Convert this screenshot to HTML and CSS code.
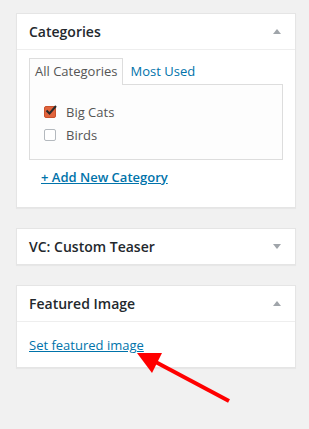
FILE: index.html
```html
<!DOCTYPE html>
<html lang="en">
<head>
    <meta charset="UTF-8">
    <meta name="viewport" content="width=device-width, initial-scale=1.0">
    <title>Post Sidebar</title>
    <link rel="stylesheet" href="styles.css">
</head>
<body>
    <div class="sidebar">
        <div class="postbox">
            <div class="postbox-header">
                <h2>Categories</h2>
                <span class="toggle up"></span>
            </div>
            <div class="inside">
                <ul class="tabs">
                    <li class="tab active">All Categories</li>
                    <li class="tab"><a href="#">Most Used</a></li>
                </ul>
                <div class="tab-panel">
                    <label class="cat-item"><span class="checkbox checked">
                        <svg width="12" height="11" viewBox="0 0 12 11"><path d="M1.5 5.5 L4.5 8.5 L11 1" fill="none" stroke="#2b2b2b" stroke-width="2"/></svg>
                    </span>Big Cats</label>
                    <label class="cat-item"><span class="checkbox"></span>Birds</label>
                </div>
                <a href="#" class="add-new">+ Add New Category</a>
            </div>
        </div>

        <div class="postbox">
            <div class="postbox-header closed">
                <h2>VC: Custom Teaser</h2>
                <span class="toggle down"></span>
            </div>
        </div>

        <div class="postbox">
            <div class="postbox-header">
                <h2>Featured Image</h2>
                <span class="toggle up"></span>
            </div>
            <div class="inside featured">
                <a href="#" class="set-image">Set featured image</a>
            </div>
        </div>
    </div>

    <!-- red pointer arrow drawn over the page -->
    <svg class="pointer" width="309" height="429" viewBox="0 0 309 429">
        <line x1="229" y1="401" x2="150" y2="359" stroke="#ff0000" stroke-width="4"/>
        <polygon points="137,353 162,353 152,373" fill="#ff0000"/>
    </svg>
</body>
</html>
```

FILE: styles.css
```css
body {
    margin: 0;
    background-color: #f1f1f1;
    font-family: "Open Sans", sans-serif;
    font-size: 13px;
    color: #444;
}
.sidebar {
    width: 280px;
    padding: 13px 0 0 16px;
}
.postbox {
    background-color: #fff;
    border: 1px solid #e5e5e5;
    box-shadow: 0 1px 1px rgba(0, 0, 0, 0.04);
    margin-bottom: 20px;
}
.postbox-header {
    display: flex;
    align-items: center;
    justify-content: space-between;
    height: 35px;
    padding: 0 14px 0 12px;
    border-bottom: 1px solid #eee;
}
.postbox-header.closed {
    border-bottom: none;
}
.postbox-header h2 {
    margin: 0;
    font-size: 14px;
    font-weight: 600;
    color: #23282d;
}
.toggle {
    width: 0;
    height: 0;
    border-left: 4px solid transparent;
    border-right: 4px solid transparent;
}
.toggle.up {
    border-bottom: 5px solid #a0a5aa;
}
.toggle.down {
    border-top: 5px solid #a0a5aa;
}
.inside {
    padding: 8px 12px 12px;
}
.tabs {
    list-style: none;
    margin: 0;
    padding: 0;
    display: flex;
}
.tab {
    padding: 3px 5px 4px;
    line-height: 19px;
    border: 1px solid transparent;
    border-bottom: none;
    margin-bottom: -1px;
}
.tab.active {
    border-color: #ddd;
    background-color: #fdfdfd;
    color: #555;
    position: relative;
}
.tab a {
    color: #0073aa;
    text-decoration: none;
    margin-left: 1px;
}
.tab-panel {
    border: 1px solid #ddd;
    background-color: #fdfdfd;
    padding: 15px 14px 13px;
}
.cat-item {
    display: flex;
    align-items: center;
    height: 23px;
    color: #555;
}
.checkbox {
    box-sizing: border-box;
    width: 12px;
    height: 12px;
    border: 1px solid #b4b9be;
    border-radius: 2px;
    background-color: #fff;
    margin-right: 10px;
    position: relative;
}
.checkbox.checked {
    background-color: #e1643d;
    border-color: #c9522d;
}
.checkbox svg {
    position: absolute;
    left: 0;
    top: -2px;
}
.add-new {
    display: inline-block;
    margin: 8px 0 9px 12px;
    color: #0073aa;
    font-weight: 600;
}
.featured {
    padding: 14px 12px 13px;
}
.set-image {
    color: #0073aa;
}
.pointer {
    position: absolute;
    left: 0;
    top: 0;
    pointer-events: none;
}
```
